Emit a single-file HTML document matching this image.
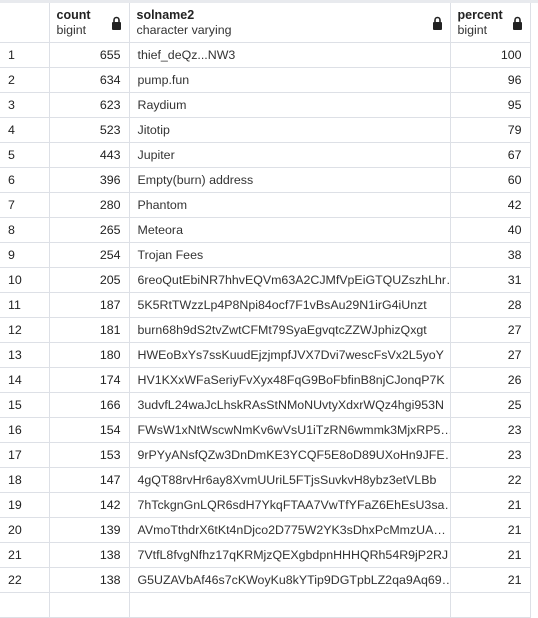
<!DOCTYPE html><html><head><style>
body{margin:0;width:538px;height:598px;background:#fff;font-family:"Liberation Sans",sans-serif;overflow:hidden;position:relative}
.top{position:absolute;left:0;top:0;width:538px;height:3px;background:#e8eaee}
table{position:absolute;left:0;top:3px;border-collapse:collapse;table-layout:fixed;width:530px}
td,th{border-right:1px solid #dde0e6;border-bottom:1px solid #dde0e6;padding:0;font-size:12.4px;color:#222;white-space:nowrap;overflow:hidden}
th{height:39px;text-align:left;font-weight:normal;position:relative;vertical-align:top}
th b{display:block;margin-top:5px;font-size:12.5px;color:#222}
th span{display:block;color:#333;font-size:12.4px;margin-top:1px}
th .l{position:absolute;right:7px;top:13px;width:11px;height:14px}
td{height:24px}
.i{padding-left:8px}.n{text-align:right;padding-right:8px}.s{padding-left:8px;color:#333;max-width:0}
</style></head><body><div class="top"></div>
<table>
<colgroup><col style="width:49px"><col style="width:80px"><col style="width:321px"><col style="width:80px"></colgroup>
<tr><th></th>
<th style="padding-left:7px"><b>count</b><span>bigint</span><svg class="l" viewBox="0 0 11 14"><path d="M3 6V4a2.5 2.5 0 0 1 5 0V6" fill="none" stroke="#222" stroke-width="1.6"/><rect x="1" y="6" width="9" height="8" rx="1" fill="#222"/></svg></th>
<th style="padding-left:7px"><b>solname2</b><span>character varying</span><svg class="l" viewBox="0 0 11 14"><path d="M3 6V4a2.5 2.5 0 0 1 5 0V6" fill="none" stroke="#222" stroke-width="1.6"/><rect x="1" y="6" width="9" height="8" rx="1" fill="#222"/></svg></th>
<th style="padding-left:7px"><b>percent</b><span>bigint</span><svg class="l" viewBox="0 0 11 14"><path d="M3 6V4a2.5 2.5 0 0 1 5 0V6" fill="none" stroke="#222" stroke-width="1.6"/><rect x="1" y="6" width="9" height="8" rx="1" fill="#222"/></svg></th></tr>
<tr><td class="i">1</td><td class="n">655</td><td class="s">thief_deQz...NW3</td><td class="n">100</td></tr>
<tr><td class="i">2</td><td class="n">634</td><td class="s">pump.fun</td><td class="n">96</td></tr>
<tr><td class="i">3</td><td class="n">623</td><td class="s">Raydium</td><td class="n">95</td></tr>
<tr><td class="i">4</td><td class="n">523</td><td class="s">Jitotip</td><td class="n">79</td></tr>
<tr><td class="i">5</td><td class="n">443</td><td class="s">Jupiter</td><td class="n">67</td></tr>
<tr><td class="i">6</td><td class="n">396</td><td class="s">Empty(burn) address</td><td class="n">60</td></tr>
<tr><td class="i">7</td><td class="n">280</td><td class="s">Phantom</td><td class="n">42</td></tr>
<tr><td class="i">8</td><td class="n">265</td><td class="s">Meteora</td><td class="n">40</td></tr>
<tr><td class="i">9</td><td class="n">254</td><td class="s">Trojan Fees</td><td class="n">38</td></tr>
<tr><td class="i">10</td><td class="n">205</td><td class="s">6reoQutEbiNR7hhvEQVm63A2CJMfVpEiGTQUZszhLhr…</td><td class="n">31</td></tr>
<tr><td class="i">11</td><td class="n">187</td><td class="s">5K5RtTWzzLp4P8Npi84ocf7F1vBsAu29N1irG4iUnzt</td><td class="n">28</td></tr>
<tr><td class="i">12</td><td class="n">181</td><td class="s">burn68h9dS2tvZwtCFMt79SyaEgvqtcZZWJphizQxgt</td><td class="n">27</td></tr>
<tr><td class="i">13</td><td class="n">180</td><td class="s">HWEoBxYs7ssKuudEjzjmpfJVX7Dvi7wescFsVx2L5yoY</td><td class="n">27</td></tr>
<tr><td class="i">14</td><td class="n">174</td><td class="s">HV1KXxWFaSeriyFvXyx48FqG9BoFbfinB8njCJonqP7K</td><td class="n">26</td></tr>
<tr><td class="i">15</td><td class="n">166</td><td class="s">3udvfL24waJcLhskRAsStNMoNUvtyXdxrWQz4hgi953N</td><td class="n">25</td></tr>
<tr><td class="i">16</td><td class="n">154</td><td class="s">FWsW1xNtWscwNmKv6wVsU1iTzRN6wmmk3MjxRP5…</td><td class="n">23</td></tr>
<tr><td class="i">17</td><td class="n">153</td><td class="s">9rPYyANsfQZw3DnDmKE3YCQF5E8oD89UXoHn9JFE…</td><td class="n">23</td></tr>
<tr><td class="i">18</td><td class="n">147</td><td class="s">4gQT88rvHr6ay8XvmUUriL5FTjsSuvkvH8ybz3etVLBb</td><td class="n">22</td></tr>
<tr><td class="i">19</td><td class="n">142</td><td class="s">7hTckgnGnLQR6sdH7YkqFTAA7VwTfYFaZ6EhEsU3sa…</td><td class="n">21</td></tr>
<tr><td class="i">20</td><td class="n">139</td><td class="s">AVmoTthdrX6tKt4nDjco2D775W2YK3sDhxPcMmzUA…</td><td class="n">21</td></tr>
<tr><td class="i">21</td><td class="n">138</td><td class="s">7VtfL8fvgNfhz17qKRMjzQEXgbdpnHHHQRh54R9jP2RJ</td><td class="n">21</td></tr>
<tr><td class="i">22</td><td class="n">138</td><td class="s">G5UZAVbAf46s7cKWoyKu8kYTip9DGTpbLZ2qa9Aq69…</td><td class="n">21</td></tr>
<tr><td></td><td></td><td></td><td></td></tr>
</table></body></html>
